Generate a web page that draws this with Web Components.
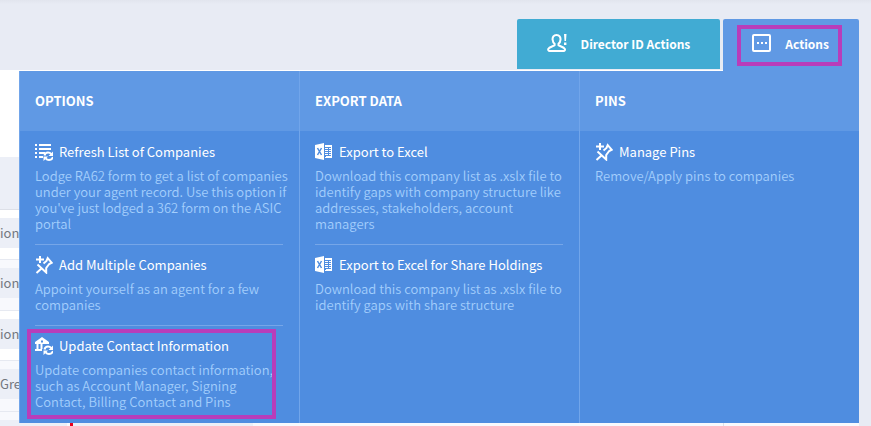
<!DOCTYPE html>
<html lang="en">
<head>
<meta charset="utf-8">
<title>Companies</title>
<style>
html, body { margin: 0; }
body {
  font-family: "Noto Sans CJK SC", "Open Sans", sans-serif;
  font-size: 13px;
  background: #e8ebf4;
}
</style>
</head>
<body>
<company-page></company-page>

<script>
const ICONS = {
  person: `<g fill="none" stroke="currentColor" stroke-width="2" stroke-linejoin="round" stroke-linecap="round"><path d="M9.500 2C6.600 2 5.400 4 5.600 6.600c.2 2 .9 3.300 2 4.200v1.500c-1 .9-5.400 1.700-6.300 3.600-.4 1 .2 2.100 1.300 2.100h14c1.200 0 1.700-1.100 1.200-2.100-.9-1.900-5.200-2.700-6.300-3.600v-1.500c1.200-1 1.900-2.300 2-4.200C13.700 4 12.400 2 9.500 2z"/></g><path fill="currentColor" d="M17 1h2.500l-.5 7h-1.500zM17 9.500h2.400v2.400H17z"/>`,
  actions: `<rect x="2" y="2" width="17" height="16" rx="1" fill="none" stroke="currentColor" stroke-width="2"/><path fill="currentColor" d="M6 9h2v2H6zM10 9h2v2h-2zM14 9h2v2h-2z"/>`,
  refresh: `<path fill="currentColor" d="M0 1h2v2H0zM4 1h12v2H4zM0 5h2v2H0zM4 5h12v2H4zM0 9h2v2H0zM4 9h6v2H4zM0 13h2v2H0zM4 13h4v2H4z"/><g fill="none" stroke="currentColor" stroke-width="2"><path d="M9.500 12.500c.5-2 1.700-3 3.500-3 1.500 0 2.500.6 3.400 1.600M18 14c-.5 2-2 3-4 3-1.500 0-2.500-.6-3.400-1.600"/></g><path fill="currentColor" d="M18 8.500V13h-4.500zM8.500 18v-4.500H13z"/>`,
  pin: `<g fill="none" stroke="currentColor" stroke-width="2"><path d="M5 0v7M1 3.500h8"/><path d="M8.500 7.500L11.500 5l1.200-2.800 4 4.500-2.500 1.300-3 4v4.500L2.500 8.500M7 12l-5.500 5"/></g>`,
  update: `<path fill="currentColor" fill-rule="evenodd" d="M7 0l7 5v2H0V5zM6 3.500v2h2v-2z"/><path fill="currentColor" d="M1.500 7h2v5h-2zM5.500 7h2v5h-2zM0 12h7v2H0z"/><g fill="none" stroke="currentColor" stroke-width="2"><path d="M9.500 12.500c.5-2 1.700-3 3.500-3 1.500 0 2.500.6 3.400 1.600M18 14c-.5 2-2 3-4 3-1.500 0-2.500-.6-3.400-1.600"/></g><path fill="currentColor" d="M18 8.500V13h-4.500zM8.500 18v-4.500H13z"/>`,
  excel: `<path fill="currentColor" d="M0 2l9-2v17l-9-2z"/><path d="M2.500 5l4 7M6.500 5l-4 7" stroke="#4f8de0" stroke-width="1.500"/><path fill="currentColor" d="M10 2h7v13h-7v-1h1v-1h-1z"/><path stroke="#4f8de0" d="M10 4.500h6M10 6.500h6M10 8.500h6M10 10.500h6M10 12.500h6M13.500 4v9"/>`
};

customElements.define('app-icon', class extends HTMLElement {
  connectedCallback() {
    const size = this.getAttribute('size') || 18;
    this.attachShadow({ mode: 'open' }).innerHTML = `
      <style>:host { display: block; flex: none; } svg { display: block; }</style>
      <svg width="${size}" height="${size}" viewBox="0 0 ${size} ${size}" aria-hidden="true">${ICONS[this.getAttribute('name')]}</svg>`;
  }
});

customElements.define('tab-button', class extends HTMLElement {
  connectedCallback() {
    this.attachShadow({ mode: 'open' }).innerHTML = `
      <style>
        :host { display: block; }
        button {
          position: relative; display: flex; align-items: center; gap: 14px;
          height: 50px; padding: 0 30px 2px; border: 0; border-radius: 2px 2px 0 0;
          background: #41abd3; color: #fff; font: inherit; font-size: 12px; font-weight: 700; cursor: pointer;
        }
        :host([active]) button { height: 52px; padding: 0 30px 4px 28px; background: #6099e4; }
        :host([marked]) button::after {
          content: ""; position: absolute; inset: 6px 17px 5px 14px; border: 4px solid #b83dba;
        }
      </style>
      <button type="button"><app-icon name="${this.getAttribute('icon')}" size="20"></app-icon><slot></slot></button>`;
  }
});

customElements.define('menu-item', class extends HTMLElement {
  connectedCallback() {
    this.attachShadow({ mode: 'open' }).innerHTML = `
      <style>
        :host { display: block; position: relative; padding: 10px 0 12px; border-bottom: 1px solid #76a6e8; }
        :host(:last-of-type) { border-color: transparent; }
        :host([marked])::after {
          content: ""; position: absolute; inset: 3px 7px 3px -8px; border: 4px solid #b83dba; pointer-events: none;
        }
        a { display: flex; align-items: center; gap: 6px; height: 20px; color: #fff; text-decoration: none; white-space: nowrap; }
        a span { padding-bottom: 2px; }
        p { margin: 6px -6px 0 0; line-height: 16px; font-weight: 350; color: #a3cefc; }
      </style>
      <a href="#"><app-icon name="${this.getAttribute('icon')}"></app-icon><span>${this.getAttribute('label')}</span></a>
      <p><slot></slot></p>`;
  }
});

customElements.define('menu-column', class extends HTMLElement {
  connectedCallback() {
    this.attachShadow({ mode: 'open' }).innerHTML = `
      <style>
        :host { display: block; border-left: 1px solid #71a5ea; background: #4f8de0; }
        h2 { display: flex; align-items: center; box-sizing: border-box; height: 60px; margin: 0; padding: 0 15px 2px; background: #6099e4; color: #fff; font-size: 13px; font-weight: 700; }
        div { padding: 1px 16px 0 15px; }
      </style>
      <h2>${this.getAttribute('heading')}</h2>
      <div><slot></slot></div>`;
  }
});

customElements.define('actions-menu', class extends HTMLElement {
  connectedCallback() {
    this.attachShadow({ mode: 'open' }).innerHTML = `
      <style>
        :host { position: absolute; top: 71px; left: 19px; right: 12px; display: grid; grid-template-columns: repeat(3, 1fr); }
      </style>
      <menu-column heading="OPTIONS">
        <menu-item icon="refresh" label="Refresh List of Companies">Lodge RA62 form to get a list of companies under your agent record. Use this option if you've just lodged a 362 form on the ASIC portal</menu-item>
        <menu-item icon="pin" label="Add Multiple Companies">Appoint yourself as an agent for a few companies</menu-item>
        <menu-item icon="update" label="Update Contact Information" marked>Update companies contact information, such as Account Manager, Signing Contact, Billing Contact and Pins</menu-item>
      </menu-column>
      <menu-column heading="EXPORT DATA">
        <menu-item icon="excel" label="Export to Excel">Download this company list as .xslx file to identify gaps with company structure like addresses, stakeholders, account managers</menu-item>
        <menu-item icon="excel" label="Export to Excel for Share Holdings">Download this company list as .xslx file to identify gaps with share structure</menu-item>
      </menu-column>
      <menu-column heading="PINS">
        <menu-item icon="pin" label="Manage Pins">Remove/Apply pins to companies</menu-item>
      </menu-column>`;
  }
});

customElements.define('company-list', class extends HTMLElement {
  connectedCallback() {
    const row = text => `<div class="row"><span class="cell">${text}</span><span class="cell required"></span><span></span><span class="last"></span></div>`;
    this.attachShadow({ mode: 'open' }).innerHTML = `
      <style>
        :host { display: flex; flex-direction: column; flex: 1; margin-right: 12px; padding-top: 87px; background: #fff; color: #73777f; }
        .head { flex: none; height: 52px; background: #eceff7; border-bottom: 1px solid #dde0e8; }
        .row { flex: none; display: grid; grid-template-columns: 67px 183px 1fr 136px; column-gap: 3px; box-sizing: border-box; height: 51px; padding: 8px 0 12px; border-bottom: 1px solid #e6e9f1; background: #f8f9fd; }
        .row:nth-child(odd) { height: 50px; padding-bottom: 11px; background: #fff; }
        .row:last-child { flex: 1; height: auto; padding-bottom: 0; border: 0; background: #f8f9fd; }
        .cell { background: #eceff7; line-height: 30px; white-space: nowrap; overflow: hidden; }
        .required { border-left: 3px solid #e8001c; }
        .last { border-left: 1px solid #dde0e8; }
      </style>
      <div class="head"></div>
      ${['ion', 'ion', 'ion', 'Grea', ''].map(row).join('')}`;
  }
});

customElements.define('company-page', class extends HTMLElement {
  connectedCallback() {
    this.attachShadow({ mode: 'open' }).innerHTML = `
      <style>
        :host { display: flex; flex-direction: column; position: relative; min-height: 100vh; }
        header { display: flex; flex: none; justify-content: flex-end; align-items: flex-start; gap: 3px; box-sizing: border-box; height: 70px; padding: 19px 12px 0 0; background: linear-gradient(#e2e5ee, #e8ebf4 4px); position: relative; z-index: 1; }
      </style>
      <header>
        <tab-button icon="person">Director ID Actions</tab-button>
        <tab-button icon="actions" active marked>Actions</tab-button>
      </header>
      <company-list></company-list>
      <actions-menu></actions-menu>`;
  }
});
</script>
</body>
</html>
